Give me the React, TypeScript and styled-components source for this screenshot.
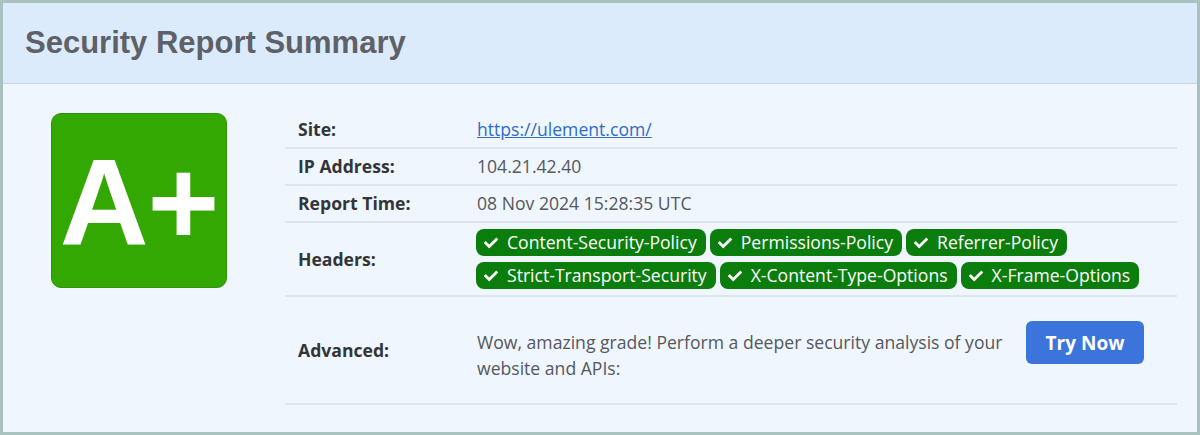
import React from 'react';
import styled, { createGlobalStyle } from 'styled-components';
import { FaCheck } from 'react-icons/fa';

const GlobalStyle = createGlobalStyle`
  html, body {
    margin: 0;
    padding: 0;
    background: #eef5fd;
  }
  * {
    box-sizing: border-box;
  }
`;

const Frame = styled.div`
  width: 1200px;
  height: 435px;
  border: 3px solid #a9c2c0;
  background: #eff6fd;
  font-family: 'Open Sans', 'Noto Sans', sans-serif;
  overflow: hidden;
`;

const Header = styled.header`
  height: 81px;
  background: #dcebfb;
  border-bottom: 1px solid #c9d5e0;
  display: flex;
  align-items: center;
  padding-left: 22px;
`;

const Title = styled.h1`
  margin: 0;
  font-family: 'Liberation Sans', Arial, sans-serif;
  font-size: 31px;
  font-weight: 700;
  color: #5e6167;
`;

const Body = styled.div`
  display: flex;
  align-items: flex-start;
  padding: 28px 20px 0 48px;
`;

const GradeBox = styled.div`
  width: 176px;
  height: 175px;
  margin-top: 1px;
  margin-right: 58px;
  flex-shrink: 0;
  background: #34a802;
  border: 1px solid #2e9404;
  border-radius: 10px;
  display: flex;
  align-items: center;
  justify-content: center;
  color: #fff;
  font-family: 'Liberation Sans', Arial, sans-serif;
  font-weight: 700;
  font-size: 123px;
  letter-spacing: -1px;
  padding-top: 4px;
`;

const Table = styled.table`
  flex: 1;
  border-collapse: collapse;
  font-size: 17.6px;
  line-height: 25px;
`;

const Row = styled.tr`
  border-bottom: 2px solid #dfe5ec;
`;

const Label = styled.th`
  width: 179px;
  text-align: left;
  font-weight: 700;
  color: #333538;
  padding: 5px 13px;
  vertical-align: middle;
`;

const Value = styled.td<{ $pad?: string }>`
  color: #55585c;
  padding: ${p => p.$pad || '5px 13px'};
  vertical-align: middle;
`;

const SiteLink = styled.a`
  color: #2f6cc6;
  text-decoration: underline;
`;

const Badges = styled.div`
  display: flex;
  flex-wrap: wrap;
  gap: 6px 4px;
  max-width: 690px;
`;

const Badge = styled.span`
  display: inline-flex;
  align-items: center;
  gap: 9px;
  height: 27px;
  padding: 0 9px 0 8px;
  background: #0a7d0c;
  color: #fff;
  border-radius: 8px;
  font-weight: 500;
  white-space: nowrap;
`;

const Advanced = styled.div`
  display: flex;
  align-items: flex-start;
  padding-right: 20px;
`;

const AdvancedText = styled.p`
  flex: 1;
  margin: 8px 0 0 0;
  line-height: 26px;
  max-width: 545px;
`;

const TryButton = styled.button`
  margin-left: auto;
  width: 118px;
  height: 43px;
  border: none;
  border-radius: 6px;
  background: #3b74da;
  color: #fff;
  font-family: 'Open Sans', 'Noto Sans', sans-serif;
  font-size: 19px;
  font-weight: 700;
  cursor: pointer;
`;

const headers = [
  'Content-Security-Policy',
  'Permissions-Policy',
  'Referrer-Policy',
  'Strict-Transport-Security',
  'X-Content-Type-Options',
  'X-Frame-Options',
];

const App: React.FC = () => {
  return (
    <>
      <GlobalStyle />
      <Frame>
        <Header>
          <Title>Security Report Summary</Title>
        </Header>
        <Body>
          <GradeBox>A+</GradeBox>
          <Table>
            <tbody>
              <Row>
                <Label>Site:</Label>
                <Value>
                  <SiteLink href="#">https://ulement.com/</SiteLink>
                </Value>
              </Row>
              <Row>
                <Label>IP Address:</Label>
                <Value>104.21.42.40</Value>
              </Row>
              <Row>
                <Label>Report Time:</Label>
                <Value>08 Nov 2024 15:28:35 UTC</Value>
              </Row>
              <Row>
                <Label>Headers:</Label>
                <Value $pad="6px 13px 6px 12px">
                  <Badges>
                    {headers.map(h => (
                      <Badge key={h}>
                        <FaCheck size={14} />
                        {h}
                      </Badge>
                    ))}
                  </Badges>
                </Value>
              </Row>
              <Row>
                <Label>Advanced:</Label>
                <Value $pad="24px 13px 22px 13px">
                  <Advanced>
                    <AdvancedText>
                      Wow, amazing grade! Perform a deeper security analysis of your website and APIs:
                    </AdvancedText>
                    <TryButton>Try Now</TryButton>
                  </Advanced>
                </Value>
              </Row>
            </tbody>
          </Table>
        </Body>
      </Frame>
    </>
  );
};

export default App;
